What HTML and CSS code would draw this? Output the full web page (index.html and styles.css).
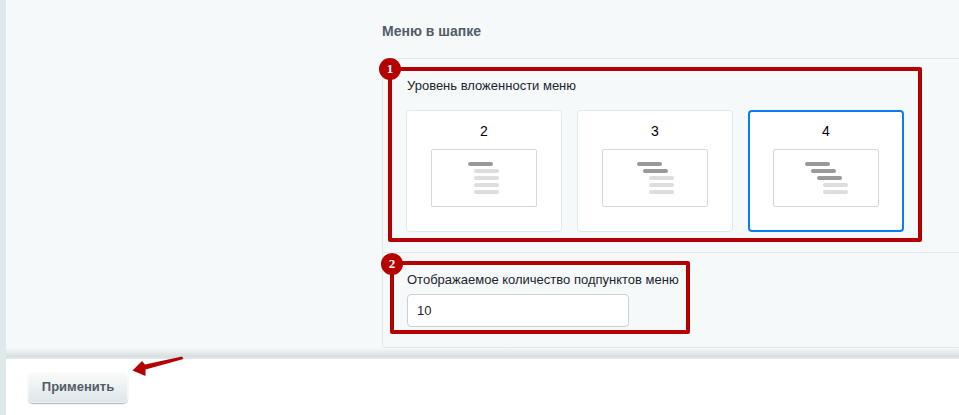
FILE: index.html
```html
<!DOCTYPE html>
<html lang="en">
<head>
    <meta charset="UTF-8">
    <meta name="viewport" content="width=device-width, initial-scale=1.0">
    <title>Меню в шапке</title>
    <link rel="stylesheet" href="styles.css">
</head>
<body>
    <div class="strip"></div>
    <div class="content">
        <div class="main">
            <h3 class="head">Меню в шапке</h3>
            <div class="box">
                <div class="row row-levels">
                    <div class="label">Уровень вложенности меню</div>
                    <div class="cards">
                        <div class="card">
                            <div class="num">2</div>
                            <div class="preview">
                                <div class="bars bars-2">
                                    <span class="bar dark"></span>
                                    <span class="bar light in1"></span>
                                    <span class="bar light in1"></span>
                                    <span class="bar light in1"></span>
                                    <span class="bar light in1"></span>
                                </div>
                            </div>
                        </div>
                        <div class="card">
                            <div class="num">3</div>
                            <div class="preview">
                                <div class="bars bars-3">
                                    <span class="bar dark"></span>
                                    <span class="bar dark in1"></span>
                                    <span class="bar light in2"></span>
                                    <span class="bar light in2"></span>
                                    <span class="bar light in2"></span>
                                </div>
                            </div>
                        </div>
                        <div class="card active">
                            <div class="num">4</div>
                            <div class="preview">
                                <div class="bars bars-4">
                                    <span class="bar dark"></span>
                                    <span class="bar dark in1"></span>
                                    <span class="bar dark in2"></span>
                                    <span class="bar light in3"></span>
                                    <span class="bar light in3"></span>
                                </div>
                            </div>
                        </div>
                    </div>
                    <div class="frame frame-levels"></div>
                    <div class="badge badge-levels">1</div>
                </div>
                <div class="row row-count">
                    <div class="label">Отображаемое количество подпунктов меню</div>
                    <input class="field" type="text" value="10">
                    <div class="frame frame-count"></div>
                    <div class="badge badge-count">2</div>
                </div>
            </div>
        </div>
        <div class="footer">
            <button class="btn">Применить</button>
            <svg class="arrow" width="54" height="21" viewBox="0 0 54 21">
                <path d="M0.5 14.5 L10 5 L13 8.5 L50 0.5 L51.5 3 L13.5 13.5 L13.5 20 Z" fill="#b50000"/>
            </svg>
        </div>
    </div>
</body>
</html>
```

FILE: styles.css
```css
* {
    box-sizing: border-box;
}
html, body {
    height: 100%;
}
body {
    font-family: "Liberation Sans", Arial, sans-serif;
    background-color: #fff;
    display: flex;
    height: 415px;
    margin: 0;
    overflow: hidden;
    color: #1c2530;
}
.strip {
    width: 6px;
    background-color: #dfe8ea;
}
.content {
    flex: 1;
    display: flex;
    flex-direction: column;
    min-width: 0;
}
.main {
    height: 359px;
    padding: 23px 0 0 376px;
    background: linear-gradient(to bottom, #f5f9f9 348px, #eaefef 351px, #d6dedf 357px, #dfe8ec 358px);
}
.head {
    margin: 0 0 19px;
    font-size: 14px;
    line-height: 16px;
    font-weight: bold;
    color: #535c69;
}
.box {
    height: 290px;
    border: 1px solid #dfe8ef;
    border-right: 0;
    border-radius: 4px 0 0 4px;
}
.row {
    position: relative;
    padding-left: 24px;
}
.row-levels {
    height: 194px;
    padding-top: 19px;
    border-bottom: 1px solid #dfe8ef;
}
.row-count {
    padding-top: 19px;
    padding-left: 24px;
}
.label {
    font-size: 13px;
    line-height: 15px;
}
.row-levels .label {
    margin-bottom: 17px;
}
.row-count .label {
    margin-bottom: 7px;
}
.cards {
    display: flex;
    gap: 15px;
    margin-left: -1px;
}
.card {
    width: 156px;
    height: 122px;
    padding-top: 12px;
    background-color: #fff;
    border: 1px solid #dfe8ef;
    border-radius: 4px;
}
.card.active {
    border: 2px solid #0a7cf5;
    padding-top: 11px;
}
.num {
    font-size: 14px;
    line-height: 16px;
    text-align: center;
    color: #000;
    margin-bottom: 10px;
}
.preview {
    width: 106px;
    height: 58px;
    margin: 0 auto;
    padding-top: 12px;
    border: 1px solid #d5d7d9;
    border-radius: 2px;
}
.bars {
    display: flex;
    flex-direction: column;
    gap: 3px;
}
.bars-2 {
    margin-left: 36px;
}
.bars-3 {
    margin-left: 34px;
}
.bars-4 {
    margin-left: 31px;
}
.bar {
    display: block;
    width: 25px;
    height: 4px;
    border-radius: 2px;
}
.dark {
    background-color: #999;
}
.light {
    background-color: #ddd;
}
.in1 {
    margin-left: 6px;
}
.in2 {
    margin-left: 12px;
}
.in3 {
    margin-left: 18px;
}
.field {
    display: block;
    width: 222px;
    height: 33px;
    padding: 0 9px;
    font-family: inherit;
    font-size: 13px;
    color: #1c2530;
    background-color: #fff;
    border: 1px solid #c6d2da;
    border-radius: 4px;
    outline: none;
}
.frame {
    position: absolute;
    border: 4.5px solid #b50000;
    border-radius: 2px;
    pointer-events: none;
}
.frame-levels {
    left: 5px;
    top: 8px;
    width: 534px;
    height: 175px;
}
.frame-count {
    left: 7px;
    top: 8px;
    width: 300px;
    height: 73px;
}
.badge {
    position: absolute;
    width: 22px;
    height: 22px;
    border-radius: 50%;
    background-color: #b50000;
    color: #fff;
    font-family: "Liberation Serif", serif;
    font-size: 13px;
    font-weight: bold;
    line-height: 22px;
    text-align: center;
}
.badge-levels {
    left: -4px;
    top: -1px;
}
.badge-count {
    left: -2px;
    top: 0;
}
.footer {
    position: relative;
    flex: 1;
    padding: 13px 0 0 22px;
}
.btn {
    width: 100px;
    height: 31px;
    padding: 0 0 2px;
    font-family: inherit;
    font-size: 13px;
    font-weight: bold;
    color: #535c69;
    background: linear-gradient(to bottom, #f9fbfb, #dde6e9);
    border: 0;
    border-radius: 5px;
    box-shadow: 0 1px 1px rgba(0, 0, 0, 0.3), inset 0 0 0 1px rgba(255, 255, 255, 0.5);
    cursor: pointer;
}
.arrow {
    position: absolute;
    left: 126px;
    top: -3px;
}
```
